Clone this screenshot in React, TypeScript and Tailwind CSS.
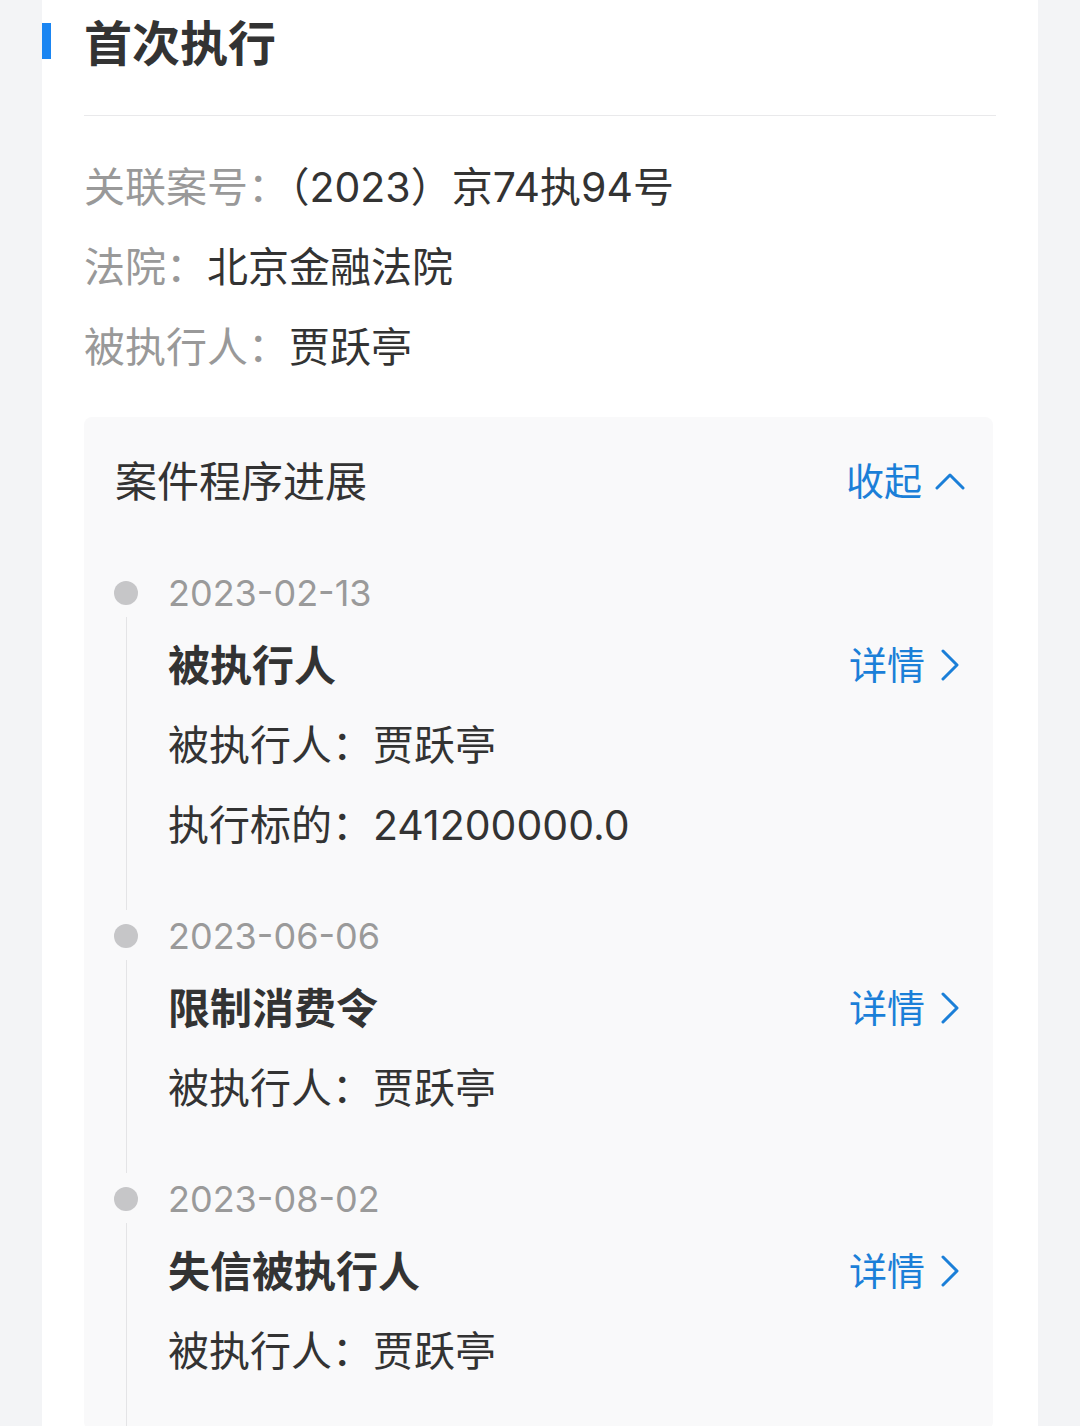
type Step = {
  date: string;
  title: string;
  lines: { label: string; value: string }[];
};

const FONT = { fontFamily: '"Inter", "Noto Sans CJK SC", sans-serif' };

const caseInfo = [
  { label: "关联案号：", value: "（2023）京74执94号" },
  { label: "法院：", value: "北京金融法院" },
  { label: "被执行人：", value: "贾跃亭" },
];

const steps: Step[] = [
  {
    date: "2023-02-13",
    title: "被执行人",
    lines: [
      { label: "被执行人：", value: "贾跃亭" },
      { label: "执行标的：", value: "241200000.0" },
    ],
  },
  {
    date: "2023-06-06",
    title: "限制消费令",
    lines: [{ label: "被执行人：", value: "贾跃亭" }],
  },
  {
    date: "2023-08-02",
    title: "失信被执行人",
    lines: [{ label: "被执行人：", value: "贾跃亭" }],
  },
];

function ArrowUp() {
  return (
    <svg width="30" height="18" viewBox="0 0 30 18" fill="none" className="ml-[13px]">
      <polyline points="2,16 15,3 28,16" stroke="currentColor" strokeWidth="3" strokeLinecap="round" strokeLinejoin="round" />
    </svg>
  );
}

function ArrowRight() {
  return (
    <svg width="18" height="32" viewBox="0 0 18 32" fill="none" className="ml-[16px]">
      <polyline points="2,2 16,16 2,30" stroke="currentColor" strokeWidth="3" strokeLinecap="round" strokeLinejoin="round" />
    </svg>
  );
}

function TimelineItem({ step }: { step: Step }) {
  return (
    <div className="relative pb-[39px]">
      {/* connector below the dot */}
      <div className="absolute left-[42px] top-[56px] bottom-[-6px] w-px bg-[#e4e4e6]" />
      <div className="flex h-[64px] items-center">
        <div className="ml-[30px] h-[24px] w-[24px] rounded-full bg-[#c6c6c8]" />
        <span className="ml-[30px] text-[36px] text-[#9a9a9a]">{step.date}</span>
      </div>
      <div className="flex h-[80px] items-center justify-between pl-[84px] pr-[34px]">
        <span className="text-[42px] font-bold text-[#333]">{step.title}</span>
        <span className="flex items-center text-[38px] text-[#1b7fd8]">
          详情
          <ArrowRight />
        </span>
      </div>
      {step.lines.map((l) => (
        <div key={l.label} className="h-[80px] pl-[84px] text-[41px] leading-[80px] text-[#333]">
          {l.label}
          {l.value}
        </div>
      ))}
    </div>
  );
}

export default function App() {
  return (
    <div className="min-h-screen bg-[#f3f4f6]" style={FONT}>
      <div className="mx-[42px] h-[1426px] overflow-hidden bg-white">
        <div className="flex items-start">
          <div className="mt-[23px] h-[36px] w-[9px] bg-[#1a85f2]" />
          <h1 className="ml-[33px] mt-[20px] text-[48px] font-bold leading-[48px] text-[#333]">
            首次执行
          </h1>
        </div>
        <div className="mx-[42px] mt-[47px] border-t border-[#e9e9eb]" />

        <div className="mx-[42px] pt-[31px]">
          {caseInfo.map((row) => (
            <div key={row.label} className="h-[80px] text-[41px] leading-[80px]">
              <span className="text-[#999]">{row.label}</span>
              <span className="text-[#333]">{row.value}</span>
            </div>
          ))}
        </div>

        <div className="ml-[42px] mr-[45px] mt-[30px] rounded-lg bg-[#f9f9fa] pt-[34px]">
          <div className="flex h-[60px] items-center justify-between pl-[31px] pr-[28px]">
            <span className="text-[42px] text-[#333]">案件程序进展</span>
            <span className="flex items-center text-[38px] text-[#1b7fd8]">
              收起
              <ArrowUp />
            </span>
          </div>
          <div className="mt-[50px]">
            {steps.map((s) => (
              <TimelineItem key={s.date} step={s} />
            ))}
          </div>
        </div>
      </div>
    </div>
  );
}
